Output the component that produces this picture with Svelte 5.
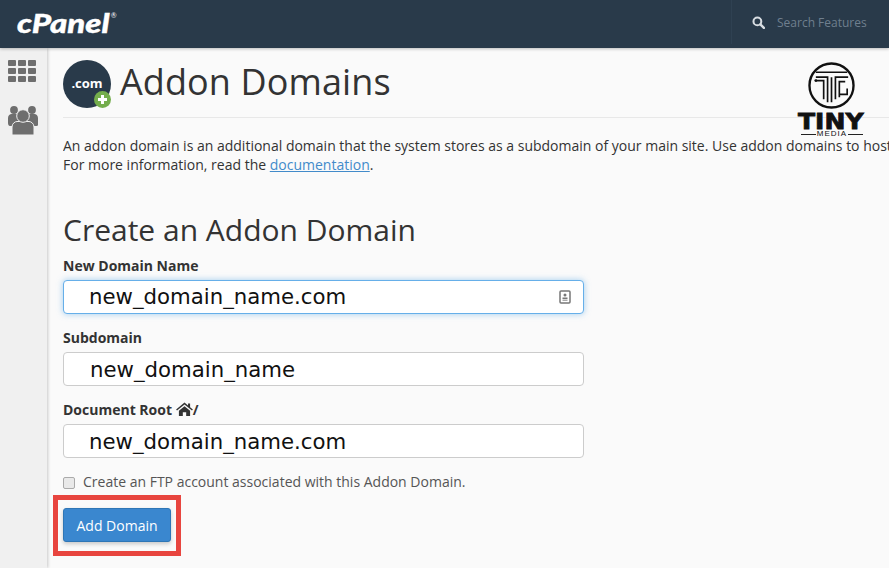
<script>
    let createFtp = false;
    const tiles = [0, 1, 2, 3, 4, 5, 6, 7, 8];
</script>

<div class="page">
    <header class="topbar">
        <div class="brand"><span>cPanel</span><sup>®</sup></div>
        <div class="search">
            <svg class="search-icon" viewBox="0 0 14 14" aria-hidden="true">
                <circle cx="5.8" cy="5.8" r="4.2" fill="none" stroke="currentColor" stroke-width="2.2" />
                <path d="M9 9l3.8 3.8" stroke="currentColor" stroke-width="2.6" stroke-linecap="round" />
            </svg>
            <span>Search Features</span>
        </div>
    </header>

    <div class="body">
        <aside class="sidebar">
            <div class="grid-icon">
                {#each tiles as tile (tile)}
                    <span></span>
                {/each}
            </div>
            <svg class="users-icon" viewBox="0 0 30 29" aria-hidden="true">
                <circle cx="6" cy="4" r="3.900" />
                <circle cx="24" cy="4" r="3.900" />
                <path d="M0 14v-2c0-2.500 2-4 3.500-4h5c2 0 3 1.500 3 3v5l-6 4H2c-1.500 0-2-1.500-2-3z" />
                <path d="M30 14v-2c0-2.500-2-4-3.500-4h-5c-2 0-3 1.500-3 3v5l6 4h4c1.500 0 2-1.500 2-3z" />
                <path class="gap" d="M4 29v-8c0-3.500 3-5.500 5-5.500h12c2 0 5 2 5 5.500v8z" />
                <circle class="gap" cx="15" cy="10" r="6.300" />
            </svg>
        </aside>

        <main class="content">
            <div class="title-row">
                <div class="app-icon">
                    <span>.com</span>
                    <i class="plus"></i>
                </div>
                <h1>Addon Domains</h1>
                <div class="tiny-logo">
                    <svg viewBox="0 0 48 48" aria-hidden="true">
                        <circle cx="24" cy="24" r="22.500" fill="none" stroke="#111" stroke-width="2.400" />
                        <path d="M8 10.500H40M8 15.500H20V41M8 19H16V38M24 41V15.500M28 38V15.500H41M32 36V20H38M32 33H40V27" fill="none" stroke="#111" stroke-width="1.700" />
                        <circle cx="8" cy="19" r="1.500" fill="#111" />
                    </svg>
                    <div class="tiny-word">TINY</div>
                    <div class="tiny-media"><i></i><span>MEDIA</span><i></i></div>
                </div>
            </div>

            <p class="intro">An addon domain is an additional domain that the system stores as a subdomain of your main site. Use addon domains to host<br />For more information, read the <a href="#docs">documentation</a>.</p>

            <h2>Create an Addon Domain</h2>

            <form on:submit|preventDefault>
                <div class="field">
                    <label for="domain">New Domain Name</label>
                    <div class="input-wrap">
                        <input id="domain" class="focused" value="new_domain_name.com" />
                        <svg class="contact-icon" viewBox="0 0 12 14" aria-hidden="true">
                            <rect x="1" y="1" width="10" height="12" rx="1" fill="none" stroke="#777" stroke-width="1.500" />
                            <circle cx="6" cy="5" r="1.500" fill="#777" />
                            <rect x="3.500" y="7.500" width="5" height="1.800" fill="#777" />
                            <rect x="3.500" y="10" width="5" height="1" fill="#aaa" />
                        </svg>
                    </div>
                </div>

                <div class="field">
                    <label for="subdomain">Subdomain</label>
                    <input id="subdomain" class="sub" value="new_domain_name" />
                </div>

                <div class="field">
                    <label for="docroot">Document Root
                        <svg class="home-icon" viewBox="0 0 18 15" aria-hidden="true">
                            <path d="M9 0.500L0 8l1 1.200L9 2.700l8 6.500L18 8l-3-2.500V1.500h-2.200v2.200z" />
                            <path d="M3 9.500L9 4.500l6 5V15h-4.200v-4H7.200v4H3z" />
                        </svg>/</label>
                    <input id="docroot" value="new_domain_name.com" />
                </div>

                <label class="check">
                    <input type="checkbox" bind:checked={createFtp} />
                    <span>Create an FTP account associated with this Addon Domain.</span>
                </label>

                <div class="highlight">
                    <button type="submit">Add Domain</button>
                </div>
            </form>
        </main>
    </div>
</div>

<style>
    :global(body) {
        margin: 0;
        overflow: hidden;
    }

    .page {
        width: 889px;
        height: 568px;
        overflow: hidden;
        font-family: "Open Sans", sans-serif;
        font-size: 14px;
        color: #333;
        background: #fafafa;
    }

    .topbar {
        height: 48px;
        background: #293a4a;
        display: flex;
        justify-content: space-between;
        box-shadow: 0 1px 3px rgba(0, 0, 0, 0.25);
        position: relative;
    }

    .brand {
        display: flex;
        padding: 5px 0 0 17px;
        font-family: "Lato", sans-serif;
        font-weight: 900;
        font-style: italic;
        font-size: 27px;
        line-height: 36px;
        color: #fff;
    }

    .brand span {
        display: block;
        transform: scaleX(1.22);
        transform-origin: left;
        -webkit-text-stroke: 0.4px #fff;
    }

    .brand sup {
        font-size: 7px;
        font-weight: 400;
        line-height: 12px;
        margin-left: 18px;
        margin-top: 4px;
    }

    .search {
        width: 158px;
        height: 44px;
        border-left: 1px solid #2f4152;
        display: flex;
        align-items: center;
        gap: 12px;
        padding-left: 20px;
        font-size: 12px;
        color: #6f7f8e;
        box-sizing: border-box;
    }

    .search-icon {
        width: 13px;
        height: 13px;
        color: #d8dde2;
    }

    .body {
        display: flex;
        height: 520px;
    }

    .sidebar {
        width: 47px;
        flex: none;
        background: #f0f0f0;
        box-shadow: 1px 0 3px rgba(0, 0, 0, 0.2);
        display: flex;
        flex-direction: column;
        align-items: center;
        padding-top: 12px;
        gap: 24px;
        box-sizing: border-box;
        padding-right: 3px;
    }

    .grid-icon {
        display: grid;
        grid-template-columns: repeat(3, 8px);
        grid-auto-rows: 6px;
        gap: 2px;
    }

    .grid-icon span {
        background: #6e6e6e;
        border-radius: 1px;
    }

    .users-icon {
        width: 30px;
        height: 29px;
        margin-left: 2px;
        fill: #6e6e6e;
    }

    .users-icon .gap {
        stroke: #f0f0f0;
        stroke-width: 1;
    }

    .content {
        flex: 1;
        min-width: 0;
        padding: 12px 0 0 16px;
    }

    .title-row {
        display: flex;
        align-items: flex-start;
        gap: 9px;
        height: 57px;
        border-bottom: 1px solid #e8e8e8;
        position: relative;
    }

    .app-icon {
        width: 48px;
        height: 48px;
        border-radius: 50%;
        background: #293a4a;
        color: #fff;
        font-weight: 700;
        font-size: 13px;
        display: flex;
        align-items: center;
        justify-content: center;
        position: relative;
        flex: none;
    }

    .app-icon span {
        margin-bottom: 2px;
    }

    .plus {
        position: absolute;
        right: 0;
        bottom: 0;
        width: 17px;
        height: 17px;
        border-radius: 50%;
        background:
            linear-gradient(#fff, #fff) center / 9px 3px no-repeat,
            linear-gradient(#fff, #fff) center / 3px 9px no-repeat,
            #74ad4c;
    }

    h1 {
        margin: 2px 0 0;
        font-weight: 400;
        font-size: 36px;
        line-height: 40px;
        color: #333;
        letter-spacing: 0.1px;
    }

    .tiny-logo {
        position: absolute;
        left: 735px;
        top: 2px;
        width: 68px;
        color: #111;
    }

    .tiny-logo svg {
        display: block;
        width: 47px;
        height: 47px;
        margin: 0 0 0 10px;
    }

    .tiny-word {
        font-family: "DejaVu Sans", sans-serif;
        font-weight: 700;
        font-size: 22px;
        line-height: 16px;
        -webkit-text-stroke: 0.8px #111;
        transform: scaleX(1.14);
        transform-origin: left;
        width: 60px;
        margin-top: 5px;
    }

    .tiny-media {
        display: flex;
        align-items: center;
        justify-content: space-between;
        padding: 0 3px;
        font-family: "Liberation Sans", sans-serif;
        font-size: 8px;
        line-height: 8px;
        letter-spacing: 1px;
    }

    .tiny-media i {
        flex: 1;
        height: 1px;
        background: #222;
    }

    .tiny-media span {
        margin: 0 1px;
    }

    .intro {
        margin: 18px 0 0;
        width: 826px;
        line-height: 19px;
        white-space: nowrap;
        overflow: hidden;
    }

    .intro a {
        color: #428bca;
    }

    h2 {
        margin: 39px 0 0;
        font-weight: 400;
        font-size: 30px;
        line-height: 33px;
        color: #333;
    }

    form {
        margin-top: 10px;
    }

    .field {
        margin-bottom: 14px;
    }

    .field label {
        display: block;
        font-weight: 700;
        font-size: 14px;
        line-height: 20px;
        margin-bottom: 4px;
    }

    .input-wrap {
        position: relative;
        width: 521px;
    }

    .field input {
        display: block;
        width: 521px;
        height: 34px;
        box-sizing: border-box;
        padding: 0 25px;
        border: 1px solid #ccc;
        border-radius: 4px;
        background: #fff;
        font-family: "DejaVu Sans", sans-serif;
        font-size: 21.25px;
        color: #111;
        outline: none;
    }

    .field input.focused {
        border-color: #66afe9;
        box-shadow: 0 0 6px rgba(102, 175, 233, 0.6);
        padding-bottom: 2px;
    }

    .field input.sub {
        padding-left: 26px;
    }

    .contact-icon {
        position: absolute;
        right: 13px;
        top: 10px;
        width: 12px;
        height: 14px;
    }

    .home-icon {
        width: 17px;
        height: 14px;
        fill: #333;
        vertical-align: -1px;
    }

    .check {
        display: flex;
        align-items: center;
        gap: 8px;
        line-height: 20px;
        color: #555;
    }

    .check input {
        appearance: none;
        width: 12px;
        height: 12px;
        margin: 2px 0 0;
        border: 1px solid #aaa;
        border-radius: 2px;
        background: #e9e9e9;
    }

    .highlight {
        width: 128px;
        height: 61px;
        box-sizing: border-box;
        border: 5px solid #e8453f;
        margin: 3px 0 0 -10px;
        padding: 8px 0 0 5px;
    }

    button {
        width: 108px;
        height: 34px;
        border: 1px solid #2e76b6;
        border-radius: 3px;
        background: #3a87cf;
        color: #fff;
        font-family: "Open Sans", sans-serif;
        font-size: 14px;
        box-shadow: 0 2px 4px rgba(0, 0, 0, 0.2);
    }
</style>
